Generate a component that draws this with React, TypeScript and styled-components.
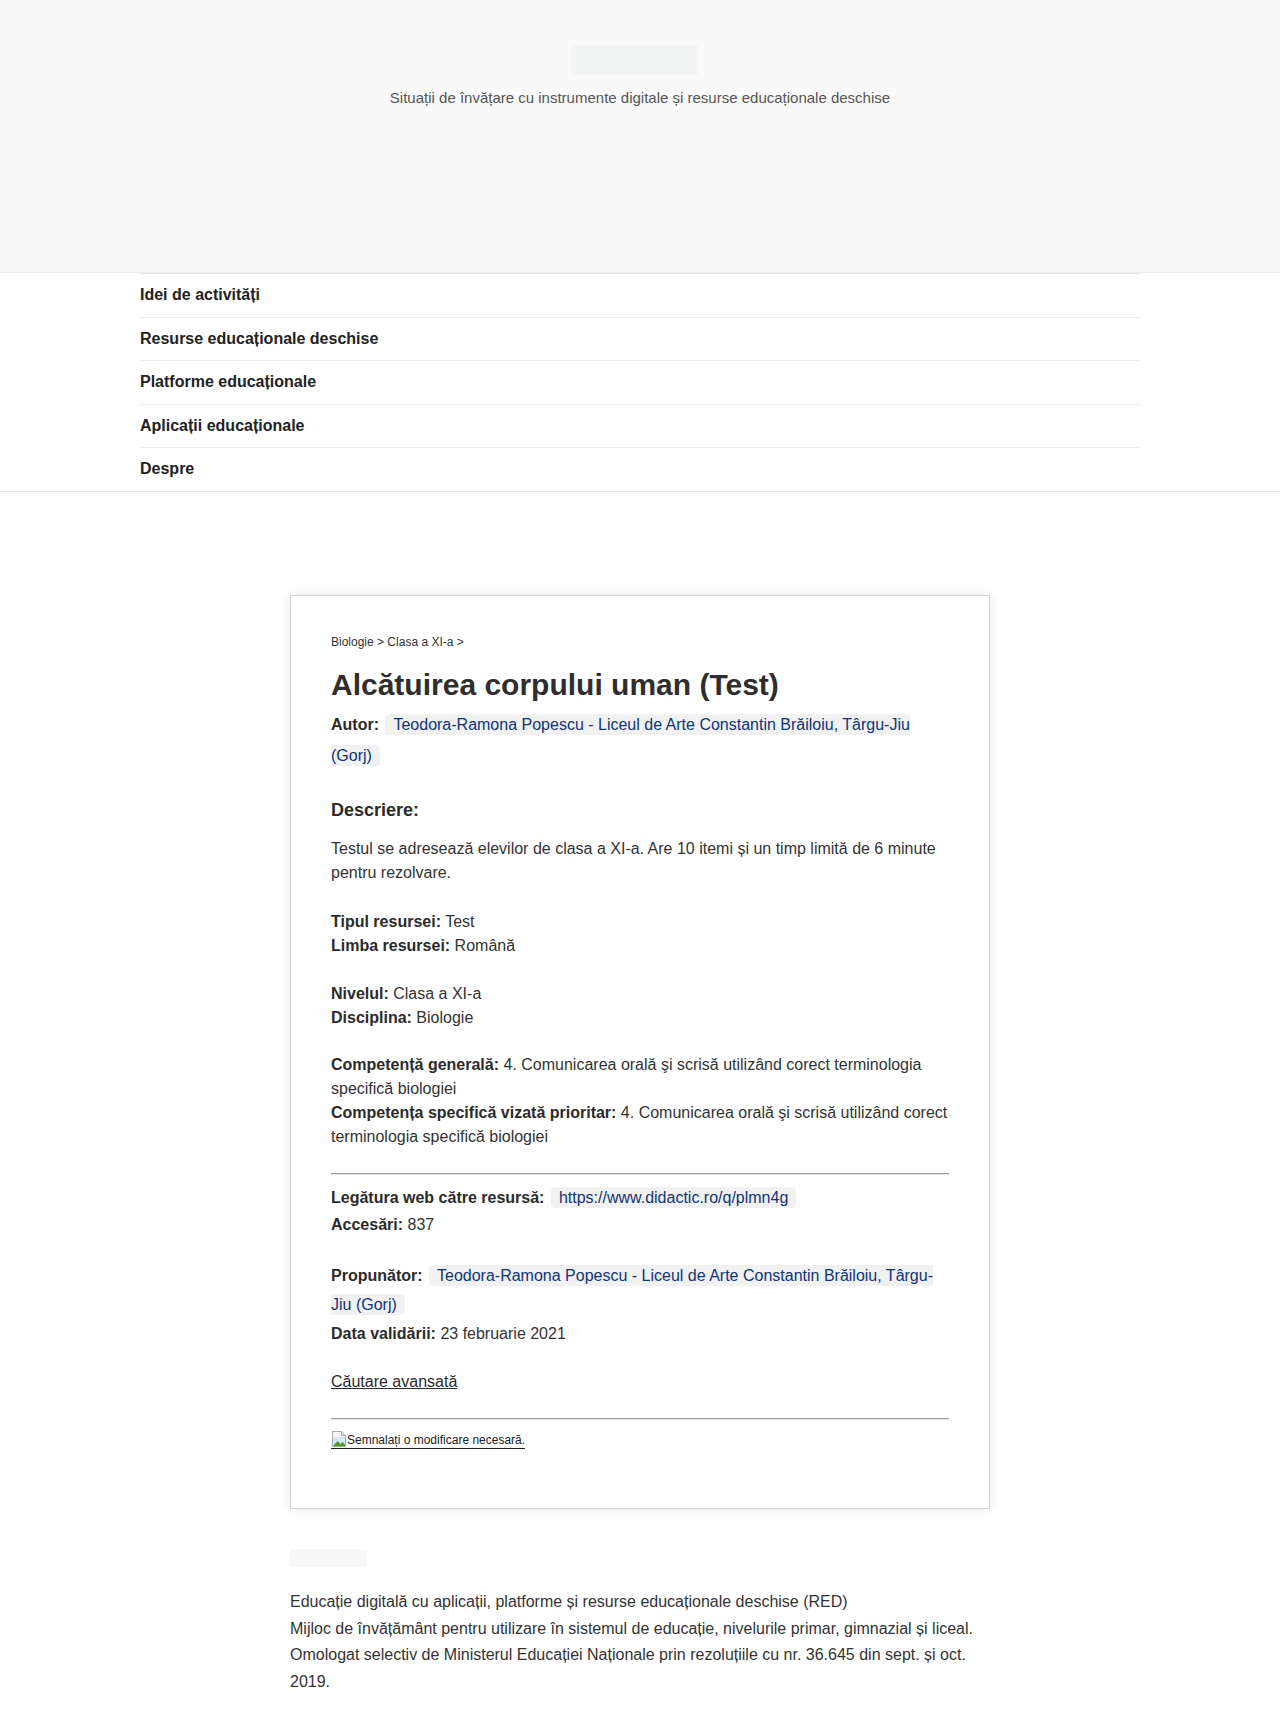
import React from "react";
import styled, { createGlobalStyle } from "styled-components";

const GlobalStyle = createGlobalStyle`
    html, body {
        margin: 0;
        padding: 0;
        background: #ffffff;
    }
    body {
        font-family: "Liberation Sans", Arial, sans-serif;
        color: #333333;
        font-size: 16px;
    }
    * {
        box-sizing: border-box;
    }
`;

const Header = styled.header`
    height: 273px;
    background-color: #f9f9f9;
    border-bottom: 1px solid #ededed;
    display: flex;
    flex-direction: column;
    align-items: center;
    padding-top: 45px;
`;

const LogoSlot = styled.div`
    width: 127px;
    height: 30px;
    margin-right: 12px;
    background-color: #f3f4f4;
`;

const Tagline = styled.div`
    margin-top: 14px;
    font-size: 15px;
    line-height: 18px;
    color: #555555;
`;

const NavWrap = styled.nav`
    border-bottom: 1px solid #e9e9e9;
`;

const NavList = styled.ul`
    list-style: none;
    margin: 0 auto;
    padding: 0;
    width: 1000px;
    border-top: 1px solid #e6e6e6;
`;

const NavItem = styled.li<{ $last?: boolean }>`
    padding: 12px 0;
    line-height: 18.5px;
    font-size: 16px;
    font-weight: 700;
    color: #222222;
    border-bottom: ${(p) => (p.$last ? "none" : "1px solid #ececec")};
`;

const Main = styled.main`
    padding-top: 103px;
    display: flex;
    flex-direction: column;
    align-items: center;
`;

const Card = styled.article`
    width: 700px;
    border: 1px solid #d3d3d3;
    box-shadow: 0 0 12px rgba(0, 0, 0, 0.09);
    padding: 38px 40px 56px 40px;
    background: #ffffff;
`;

const Crumbs = styled.div`
    font-size: 12px;
    line-height: 16px;
    color: #333333;
`;

const Title = styled.h1`
    margin: 17px 0 0 0;
    font-size: 30px;
    line-height: 36px;
    font-weight: 700;
    color: #2e2e2e;
`;

const Block = styled.p<{ $lh: number; $mt: number }>`
    margin: ${(p) => p.$mt}px 0 0 0;
    line-height: ${(p) => p.$lh}px;
    font-size: 16px;
    color: #333333;
`;

const Label = styled.b`
    font-weight: 700;
    color: #2b2b2b;
`;

const Chip = styled.span`
    background-color: #f1f1f2;
    color: #0f3479;
    padding: 2px 8px;
    border-radius: 4px;
    margin-left: 2px;
`;

const SectionTitle = styled.h3`
    margin: 27px 0 0 0;
    font-size: 18px;
    line-height: 24px;
    font-weight: 700;
    color: #2b2b2b;
`;

const Rule = styled.hr<{ $mt: number }>`
    margin: ${(p) => p.$mt}px 0 0 0;
    border: none;
    border-top: 1px solid #9c9c9c;
    border-bottom: 1px solid #e4e4e4;
    height: 0;
`;

const PlainLink = styled.a`
    color: #2b2b2b;
    text-decoration: underline;
`;

const ReportLink = styled.a`
    display: inline-flex;
    align-items: flex-end;
    margin-top: 10px;
    font-size: 12px;
    line-height: 16px;
    color: #222222;
    border-bottom: 1px solid #222222;
    text-decoration: none;
`;

const Footer = styled.footer`
    width: 700px;
    margin: 40px auto 0 auto;
    padding-bottom: 24px;
`;

const FooterSlot = styled.div`
    width: 77px;
    height: 18px;
    background-color: #f7f7f7;
`;

const FooterText = styled.p`
    margin: 22.75px 0 0 0;
    font-size: 16px;
    line-height: 26.5px;
    color: #333333;
`;

const BrokenImage = () => (
    <svg width="16" height="18" viewBox="0 0 16 18" aria-hidden="true">
        <path d="M1.5 1.5h9l4 4v11h-13z" fill="#f4f4f4" stroke="#a9a9a9" />
        <path d="M10.5 1.5v4h4" fill="#dcdcdc" stroke="#a9a9a9" />
        <rect x="2" y="7" width="12" height="9" fill="#d9e8f5" />
        <path d="M2 16l4.5-5 3 3 2-2 2.5 2.5v1.5z" fill="#4d9a2e" />
    </svg>
);

const navItems = [
    "Idei de activități",
    "Resurse educaționale deschise",
    "Platforme educaționale",
    "Aplicații educaționale",
    "Despre",
];

export default function App() {
    return (
        <>
            <GlobalStyle />
            <Header>
                <LogoSlot />
                <Tagline>
                    Situații de învățare cu instrumente digitale și resurse educaționale deschise
                </Tagline>
            </Header>
            <NavWrap>
                <NavList>
                    {navItems.map((item, i) => (
                        <NavItem key={item} $last={i === navItems.length - 1}>
                            {item}
                        </NavItem>
                    ))}
                </NavList>
            </NavWrap>
            <Main>
                <Card>
                    <Crumbs>Biologie &gt; Clasa a XI-a &gt;</Crumbs>
                    <Title>Alcătuirea corpului uman (Test)</Title>
                    <Block $lh={31} $mt={6.5}>
                        <Label>Autor:</Label>{" "}
                        <Chip>
                            Teodora-Ramona Popescu - Liceul de Arte Constantin Brăiloiu, Târgu-Jiu (Gorj)
                        </Chip>
                    </Block>
                    <SectionTitle>Descriere:</SectionTitle>
                    <Block $lh={24} $mt={15}>
                        Testul se adresează elevilor de clasa a XI-a. Are 10 itemi și un timp limită
                        de 6 minute pentru rezolvare.
                    </Block>
                    <Block $lh={24} $mt={24.5}>
                        <Label>Tipul resursei:</Label> Test
                        <br />
                        <Label>Limba resursei:</Label> Română
                    </Block>
                    <Block $lh={24} $mt={24.5}>
                        <Label>Nivelul:</Label> Clasa a XI-a
                        <br />
                        <Label>Disciplina:</Label> Biologie
                    </Block>
                    <Block $lh={24} $mt={23}>
                        <Label>Competență generală:</Label> 4. Comunicarea orală şi scrisă utilizând
                        corect terminologia specifică biologiei
                        <br />
                        <Label>Competența specifică vizată prioritar:</Label> 4. Comunicarea orală şi
                        scrisă utilizând corect terminologia specifică biologiei
                    </Block>
                    <Rule $mt={24} />
                    <Block $lh={27} $mt={9}>
                        <Label>Legătura web către resursă:</Label>{" "}
                        <Chip>https://www.didactic.ro/q/plmn4g</Chip>
                        <br />
                        <Label>Accesări:</Label> 837
                    </Block>
                    <Block $lh={29} $mt={22.5}>
                        <Label>Propunător:</Label>{" "}
                        <Chip>
                            Teodora-Ramona Popescu - Liceul de Arte Constantin Brăiloiu, Târgu-Jiu (Gorj)
                        </Chip>
                        <br />
                        <Label>Data validării:</Label> 23 februarie 2021
                    </Block>
                    <Block $lh={24} $mt={22}>
                        <PlainLink href="#">Căutare avansată</PlainLink>
                    </Block>
                    <Rule $mt={24} />
                    <div>
                        <ReportLink href="#">
                            <BrokenImage />
                            <span>Semnalați o modificare necesară.</span>
                        </ReportLink>
                    </div>
                </Card>
            </Main>
            <Footer>
                <FooterSlot />
                <FooterText>
                    Educație digitală cu aplicații, platforme și resurse educaționale deschise (RED)
                    <br />
                    Mijloc de învățământ pentru utilizare în sistemul de educație, nivelurile primar,
                    gimnazial și liceal.
                    <br />
                    Omologat selectiv de Ministerul Educației Naționale prin rezoluțiile cu nr. 36.645
                    din sept. și oct. 2019.
                </FooterText>
            </Footer>
        </>
    );
}
